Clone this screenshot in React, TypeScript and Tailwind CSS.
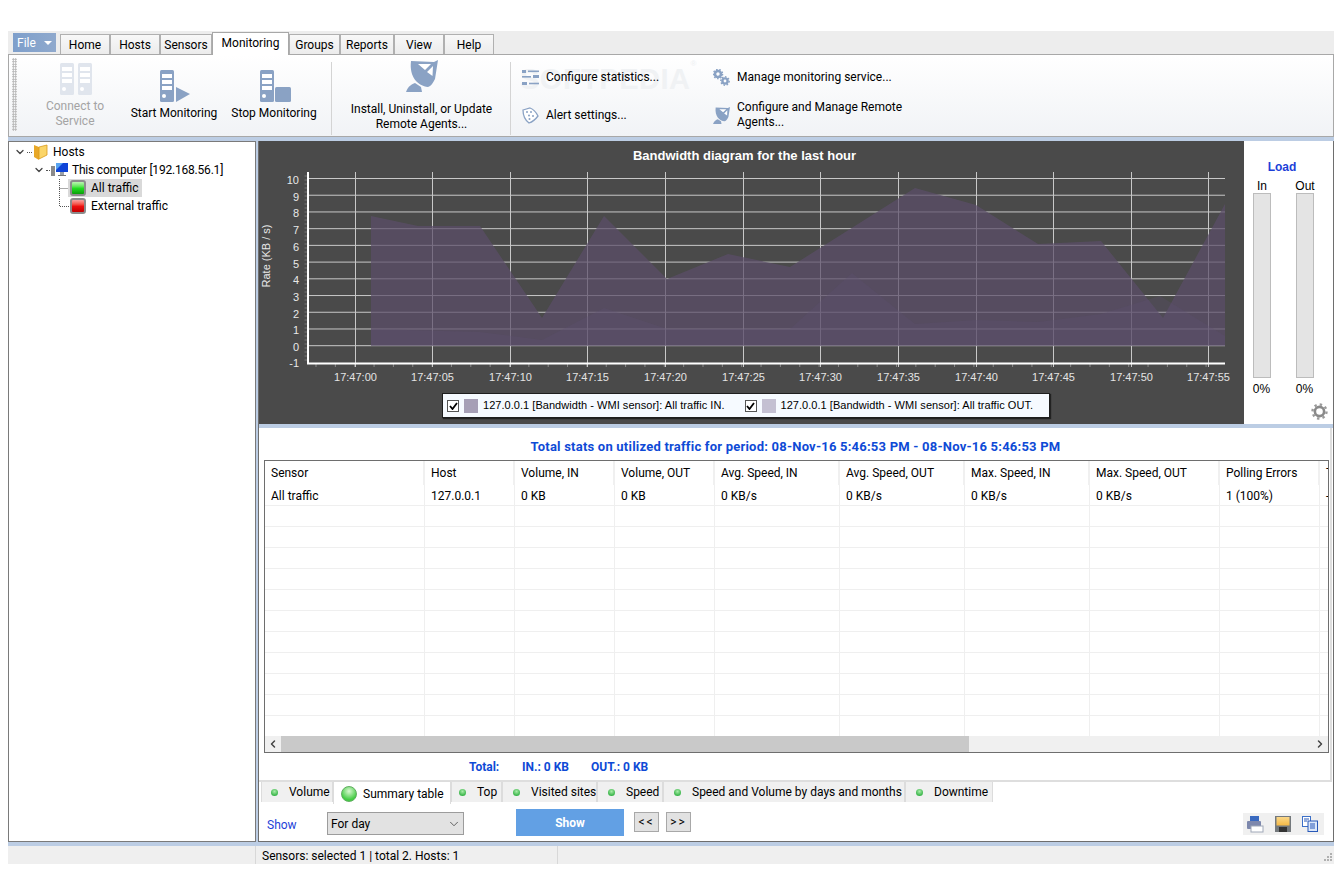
import { ReactNode } from 'react';
import { ChevronDown, ChevronLeft, ChevronRight } from 'lucide-react';

const UI_FONT = 'font-["Roboto","Noto_Sans",sans-serif]';

const topTabs = [
  { label: 'Home', width: 'w-[50px]' },
  { label: 'Hosts', width: 'w-[50px]' },
  { label: 'Sensors', width: 'w-[52px]' },
  { label: 'Monitoring', width: 'w-[77px]', active: true },
  { label: 'Groups', width: 'w-[51px]' },
  { label: 'Reports', width: 'w-[54px]' },
  { label: 'View', width: 'w-[50px]' },
  { label: 'Help', width: 'w-[50px]' },
];

const bottomTabs = [
  { label: 'Volume', width: 'w-[72px]', pad: 'pl-[9px]' },
  { label: 'Summary table', width: 'w-[118px]', active: true, pad: 'pl-[7px]' },
  { label: 'Top', width: 'w-[51px]', pad: 'pl-[7px]' },
  { label: 'Visited sites', width: 'w-[95px]', pad: 'pl-[10px]' },
  { label: 'Speed', width: 'w-[66px]', pad: 'pl-[10px]' },
  { label: 'Speed and Volume by days and months', width: 'w-[242px]', pad: 'pl-[10px]' },
  { label: 'Downtime', width: 'w-[88px]', pad: 'pl-[10px]' },
];

const columns = [
  { name: 'Sensor', value: 'All traffic' },
  { name: 'Host', value: '127.0.0.1' },
  { name: 'Volume, IN', value: '0 KB' },
  { name: 'Volume, OUT', value: '0 KB' },
  { name: 'Avg. Speed, IN', value: '0 KB/s' },
  { name: 'Avg. Speed, OUT', value: '0 KB/s' },
  { name: 'Max. Speed, IN', value: '0 KB/s' },
  { name: 'Max. Speed, OUT', value: '0 KB/s' },
  { name: 'Polling Errors', value: '1 (100%)' },
  { name: 'T', value: '-' },
];

const timeLabels = ['17:47:00', '17:47:05', '17:47:10', '17:47:15', '17:47:20', '17:47:25', '17:47:30', '17:47:35', '17:47:40', '17:47:45', '17:47:50', '17:47:55'];
const timeX = [355.5, 432.5, 510.5, 587.5, 665.5, 743.5, 820.5, 898.5, 976.5, 1053.5, 1131.5, 1208.5];

const areaIn = '371,345.7 371,216 418,226 480,226 542,318 604,216 667,279 728,254 790,267 915,188 976,205 1038,244 1101,241 1163,318 1225,204 1225,345.7';
const areaOut = '371,345.7 371,329 480,332 542,340 604,308 667,329 790,329 852,273 915,324 976,320 1038,322 1101,314 1160,296 1225,336 1225,345.7';

function ServerIcon({ color = '#8aa2c4', x = 0 }: { color?: string; x?: number }) {
  return (
    <g transform={`translate(${x} 0)`}>
      <rect x="0" y="0" width="14" height="32" rx="1.5" fill={color} />
      <rect x="2" y="4" width="10" height="4" fill="#fff" />
      <rect x="2" y="10" width="10" height="4" fill="#fff" />
      <rect x="2" y="16" width="10" height="4" fill="#fff" />
      <circle cx="4" cy="26" r="2" fill="#fff" />
    </g>
  );
}

function DishIcon({ size = 32, color = '#8aa2c4' }: { size?: number; color?: string }) {
  return (
    <svg width={size} height={size} viewBox="0 0 32 32">
      <path d="M5 1 L28 2 L32 0 L29 19 C27 23 25 26 22 27 C12 26 3 17 5 1 Z" fill={color} />
      <path d="M12 4 L25 4 L19 10 Z M27 6 L26.5 16 L21 12 Z" fill="#fff" />
      <path d="M0 32 C2 26 6 24 9 23 L15 27 L16 32 Z" fill={color} />
    </svg>
  );
}

function LargeButton({ width, icon, children, muted }: { width: string; icon: ReactNode; children: ReactNode; muted?: boolean }) {
  return (
    <div className={`flex flex-col items-center shrink-0 ${width}`}>
      {icon}
      <div className={`text-center leading-[15px] ${muted ? 'text-[#a4a4a4]' : 'text-black'}`}>{children}</div>
    </div>
  );
}

function SmallAction({ icon, children }: { icon: ReactNode; children: ReactNode }) {
  return (
    <div className="relative flex items-center h-[30px]">
      <div className="w-[24px] shrink-0 flex">{icon}</div>
      <div className="leading-[15px]">{children}</div>
    </div>
  );
}

function StatsIcon() {
  return (
    <svg width="17" height="17" viewBox="0 0 17 17" fill="#8aa2c4">
      <rect x="0" y="1" width="4" height="3" />
      <rect x="6" y="1.5" width="11" height="1.6" />
      <rect x="0" y="7" width="9" height="1.6" />
      <rect x="11" y="6" width="6" height="3" />
      <rect x="0" y="13" width="5" height="3" />
      <rect x="7" y="13.7" width="10" height="1.6" />
    </svg>
  );
}

function AlertIcon() {
  return (
    <svg width="17" height="17" viewBox="0 0 17 17">
      <path d="M1 3 L8 1 C11 2 14 5 16 9 C13 13 10 15 7 16 C3 13 1 8 1 3 Z" fill="#fff" stroke="#8aa2c4" strokeWidth="1.3" />
      <circle cx="5" cy="5" r="1" fill="#8aa2c4" />
      <circle cx="9" cy="5" r="1" fill="#8aa2c4" />
      <circle cx="7" cy="8.5" r="1" fill="#8aa2c4" />
      <circle cx="11" cy="9" r="1" fill="#8aa2c4" />
      <circle cx="7.5" cy="12" r="1" fill="#8aa2c4" />
    </svg>
  );
}

function GearsIcon() {
  return (
    <svg width="17" height="17" viewBox="0 0 17 17" fill="none" stroke="#8aa2c4">
      <circle cx="5" cy="5" r="3" strokeWidth="2.6" />
      <circle cx="5" cy="5" r="4.6" strokeWidth="1.4" strokeDasharray="1.6 1.6" />
      <circle cx="12" cy="12" r="2.6" strokeWidth="2.4" />
      <circle cx="12" cy="12" r="4.2" strokeWidth="1.4" strokeDasharray="1.6 1.6" />
    </svg>
  );
}

function Ribbon() {
  return (
    <div className="relative h-[83px] flex bg-gradient-to-b from-white to-[#f1f3f6] border border-[#a8a8a8] text-[12px] overflow-hidden">
      {/* watermark sits under the small action labels */}
      <div className='absolute left-[511px] top-[3px] text-[29px] font-bold tracking-[0.5px] text-[#f0f2f4] font-["Liberation_Sans",sans-serif]'>
        SOFTPEDIA<span className="text-[8px] align-top">®</span>
      </div>
      <div className="w-[5px] ml-[3px] mt-[3px] h-[73px] shrink-0 bg-[radial-gradient(#b4b4b4_50%,transparent_55%)] bg-[length:2.5px_2.5px]" />
      <div className="pl-[12px] pt-[8px] flex">
        <LargeButton
          width="w-[92px]"
          muted
          icon={
            <svg width="32" height="32" viewBox="0 0 32 32" className="mb-[4px] ml-[1px]">
              <ServerIcon color="#e0e5ed" x={0} />
              <ServerIcon color="#e0e5ed" x={18} />
            </svg>
          }
        >
          Connect to
          <br />
          Service
        </LargeButton>
        <div className="w-[7px] shrink-0" />
        <LargeButton
          width="w-[92px]"
          icon={
            <svg width="30" height="32" viewBox="0 0 30 32" className="mt-[7px] mb-[4px] ml-[2px]">
              <ServerIcon />
              <path d="M16 17 L30 24 L16 32 Z" fill="#8aa2c4" />
            </svg>
          }
        >
          <span className="whitespace-nowrap">Start Monitoring</span>
        </LargeButton>
        <div className="w-[8px] shrink-0" />
        <LargeButton
          width="w-[92px]"
          icon={
            <svg width="31" height="32" viewBox="0 0 31 32" className="mt-[7px] mb-[4px] ml-[3px]">
              <ServerIcon />
              <rect x="15" y="17" width="16" height="15" rx="1.5" fill="#8aa2c4" />
            </svg>
          }
        >
          <span className="whitespace-nowrap">Stop Monitoring</span>
        </LargeButton>
      </div>
      <div className="w-px h-[73px] mt-[7px] ml-[11px] bg-[#d4d4d4] shrink-0" />
      <div className="pt-[5px] pl-[1px]">
        <LargeButton
          width="w-[177px]"
          icon={
            <div className="mb-[8px] h-[34px]">
              <DishIcon />
            </div>
          }
        >
          Install, Uninstall, or Update
          <br />
          Remote Agents...
        </LargeButton>
      </div>
      <div className="w-px h-[73px] mt-[7px] bg-[#d4d4d4] shrink-0" />
      <div className="pl-[11px] pt-[7px] w-[202px] shrink-0 flex flex-col gap-[8px]">
        <SmallAction icon={<StatsIcon />}>Configure statistics...</SmallAction>
        <SmallAction icon={<AlertIcon />}>Alert settings...</SmallAction>
      </div>
      <div className="pt-[7px] w-[192px] shrink-0 flex flex-col gap-[8px]">
        <SmallAction icon={<GearsIcon />}>Manage monitoring service...</SmallAction>
        <SmallAction icon={<DishIcon size={17} />}>Configure and Manage Remote Agents...</SmallAction>
      </div>
    </div>
  );
}

function Connector({ last }: { last?: boolean }) {
  return (
    <svg width="11" height="18" viewBox="0 0 11 18" className="shrink-0">
      <path d={last ? 'M0.5 0 V9.5 H11' : 'M0.5 0 V18 M0.5 9.5 H11'} stroke="#555" strokeDasharray="1 1" fill="none" />
    </svg>
  );
}

function StateIcon({ color }: { color: 'green' | 'red' }) {
  const fill = color === 'green' ? 'from-[#b8f5b0] via-[#22e022] to-[#0aa00a]' : 'from-[#f8a0a0] via-[#f01010] to-[#c00000]';
  return <div className={`w-[16px] h-[16px] shrink-0 rounded-[3px] border-2 border-[#8c8c8c] bg-gradient-to-b ${fill}`} />;
}

function Tree() {
  return (
    <div className="w-[248px] shrink-0 bg-white border border-[#7a7a7a] text-[12px] pt-[1px] text-black">
      <div className="h-[18px] flex items-center">
        <ChevronDown size={12} strokeWidth={2.6} className="ml-[5px] text-[#444]" />
        <div className="w-[5px] ml-[1px] mr-px border-t border-dotted border-[#555]" />
        <svg width="16" height="17" viewBox="0 0 16 17" className="shrink-0">
          <path d="M1 1 L6 3 V16 L1 13 Z" fill="#e8a828" />
          <path d="M6 3 L14 1 V11 L6 15 Z" fill="#fbd568" stroke="#d99a1c" strokeWidth="0.8" />
        </svg>
        <span className="ml-[4px]">Hosts</span>
      </div>
      <div className="h-[18px] flex items-center">
        <ChevronDown size={12} strokeWidth={2.6} className="ml-[24px] text-[#444]" />
        <div className="w-[4px] ml-[1px] mr-px border-t border-dotted border-[#555]" />
        <svg width="17" height="16" viewBox="0 0 17 16" className="shrink-0">
          <rect x="0" y="4" width="4" height="10" fill="#8a8a8a" />
          <rect x="5" y="1" width="12" height="9" fill="#0f44d8" />
          <path d="M5 1 H12 L5 8 Z" fill="#5aa4f0" />
          <rect x="9" y="10" width="4" height="3" fill="#9aa0a8" />
          <rect x="7" y="13" width="8" height="1" fill="#777" />
        </svg>
        <span className="ml-[4px] whitespace-nowrap tracking-[-0.2px]">This computer [192.168.56.1]</span>
      </div>
      <div className="h-[18px] flex items-center pl-[50px]">
        <Connector />
        <div className="flex items-center gap-[3px] bg-[#d9d9d9] h-[18px] w-[74px] -ml-[2px] pl-[2px]">
          <StateIcon color="green" />
          <span className="ml-[2px]">All traffic</span>
        </div>
      </div>
      <div className="h-[18px] flex items-center pl-[50px]">
        <Connector last />
        <div className="flex items-center gap-[3px] h-[18px] -ml-[2px] pl-[2px]">
          <StateIcon color="red" />
          <span className="ml-[2px] whitespace-nowrap">External traffic</span>
        </div>
      </div>
    </div>
  );
}

function BandwidthChart() {
  const gridY = Array.from({ length: 11 }, (_, i) => 178.5 + i * 16.72);
  const minorX = Array.from({ length: 47 }, (_, i) => 316 + i * 19.35);
  const minorY = Array.from({ length: 47 }, (_, i) => 176 + i * 4);
  return (
    <svg width="985" height="225" viewBox="259 165 985 225" className='block shrink-0 font-["Liberation_Sans",sans-serif]'>
      {minorY.map((y) => (
        <line key={y} x1="304.5" x2="307" y1={y} y2={y} stroke="#777" />
      ))}
      {minorX.map((x) => (
        <line key={x} x1={x} x2={x} y1="364" y2="367" stroke="#888" />
      ))}
      {gridY.map((y) => (
        <line key={y} x1="308" x2="1225" y1={y} y2={y} stroke="#c8c8c8" />
      ))}
      {timeX.map((x) => (
        <line key={x} x1={x} x2={x} y1="172" y2="367" stroke="#c8c8c8" />
      ))}
      <polygon points={areaIn} fill="#5b4e69" fillOpacity="0.72" />
      <polygon points={areaOut} fill="#5e5072" fillOpacity="0.3" />
      <line x1="308" x2="308" y1="172" y2="364" stroke="#fff" strokeWidth="2" />
      <line x1="307" x2="1225" y1="363.5" y2="363.5" stroke="#fff" strokeWidth="2" />
      {['10', '9', '8', '7', '6', '5', '4', '3', '2', '1', '0', '-1'].map((label, i) => (
        <text key={label} x="299" y={184 + i * 16.72 - (i === 11 ? 1 : 0)} textAnchor="end" fontSize="11" fill="#e8e8e8">
          {label}
        </text>
      ))}
      {timeLabels.map((label, i) => (
        <text key={label} x={timeX[i]} y="381" textAnchor="middle" fontSize="11" fill="#e4e4e4">
          {label}
        </text>
      ))}
      <text x="0" y="0" transform="translate(270 256) rotate(-90)" textAnchor="middle" fontSize="11" fill="#e8e8e8">
        Rate (KB / s)
      </text>
    </svg>
  );
}

function LegendItem({ swatch, label }: { swatch: string; label: string }) {
  return (
    <div className="flex items-center h-full">
      <div className="w-[12px] h-[12px] bg-white border border-[#555] flex items-center justify-center">
        <svg width="9" height="8" viewBox="0 0 9 8">
          <path d="M1 4 L3.5 7 L8 1" stroke="#000" strokeWidth="1.8" fill="none" />
        </svg>
      </div>
      <div className={`w-[14px] h-[14px] ml-[5px] ${swatch}`} />
      <span className="ml-[5px] whitespace-nowrap tracking-[0.04px]">{label}</span>
    </div>
  );
}

function ChartPanel() {
  return (
    <div className="w-[985px] shrink-0 bg-[#4a4a4a] flex flex-col">
      <div className='h-[24px] pt-[7px] pr-[14px] text-center text-[13px] leading-[16px] font-bold text-white font-["Liberation_Sans",sans-serif]'>
        Bandwidth diagram for the last hour
      </div>
      <BandwidthChart />
      <div className='ml-[183px] mt-[3px] w-[608px] h-[25px] bg-[#f6faff] border border-[#1e1e1e] shadow-[1px_1px_1px_#222] pl-[4px] flex gap-[20px] text-[11px] text-black font-["Liberation_Sans",sans-serif]'>
        <LegendItem swatch="bg-[#a69fb6]" label="127.0.0.1 [Bandwidth - WMI sensor]: All traffic IN." />
        <LegendItem swatch="bg-[#c4c0d2]" label="127.0.0.1 [Bandwidth - WMI sensor]: All traffic OUT." />
      </div>
    </div>
  );
}

function LoadBar({ label }: { label: string }) {
  return (
    <div className="w-[18px] flex flex-col items-center">
      <div className="h-[17px] leading-[21px] whitespace-nowrap">{label}</div>
      <div className="w-[18px] h-[185px] bg-[#e4e4e4] border border-[#bcbcbc]" />
      <div className="mt-[3px] leading-[16px] -ml-px">0%</div>
    </div>
  );
}

function LoadPanel() {
  return (
    <div className='flex-1 bg-white flex flex-col relative text-[12px] text-black font-["Liberation_Sans",sans-serif]'>
      <div className="text-center font-bold text-[#1d3fd8] mt-[19px] h-[16px] leading-[14px] pr-[13px] text-[12px]">Load</div>
      <div className="flex gap-[25px] pl-[9px]">
        <LoadBar label="In" />
        <LoadBar label="Out" />
      </div>
      <svg width="17" height="17" viewBox="0 0 17 17" className="absolute right-[5px] bottom-[4px]" fill="none">
        <circle cx="8.5" cy="8.5" r="4.6" stroke="#8a8a8a" strokeWidth="2.6" />
        <circle cx="8.5" cy="8.5" r="7" stroke="#9a9a9a" strokeWidth="2.4" strokeDasharray="2.4 3.1" />
      </svg>
    </div>
  );
}

const gridTemplate = 'grid grid-cols-[160px_90px_100px_100px_125px_125px_125px_130px_100px_21px]';

function StatsTable() {
  return (
    <div className="ml-[5px] h-[293px] w-[1065px] border border-[#6e6e6e] flex flex-col bg-white overflow-hidden text-[12px] text-black">
      <div className={`${gridTemplate} h-[24px] shrink-0`}>
        {columns.map((c) => (
          <div key={c.name} className="pl-[6px] leading-[24px] border-r-2 border-[#f0f0f0] whitespace-nowrap overflow-hidden">
            {c.name}
          </div>
        ))}
      </div>
      <div className={`${gridTemplate} h-[21px] shrink-0 border-b border-[#efefef]`}>
        {columns.map((c) => (
          <div key={c.name} className="pl-[6px] leading-[22px] border-r border-[#efefef] whitespace-nowrap overflow-hidden">
            {c.value}
          </div>
        ))}
      </div>
      {Array.from({ length: 11 }, (_, row) => (
        <div key={row} className={`${gridTemplate} h-[21px] shrink-0 border-b border-[#efefef]`}>
          {columns.map((c) => (
            <div key={c.name} className="border-r border-[#efefef]" />
          ))}
        </div>
      ))}
      <div className="h-[16px] -mt-px shrink-0 bg-[#f0f0f0] flex items-center">
        <div className="w-[16px] flex justify-center">
          <ChevronLeft size={12} strokeWidth={3} className="text-[#444]" />
        </div>
        <div className="w-[688px] h-full bg-[#c9c9c9]" />
        <div className="flex-1" />
        <div className="w-[17px] flex justify-center">
          <ChevronRight size={12} strokeWidth={3} className="text-[#444]" />
        </div>
      </div>
    </div>
  );
}

function TabDot({ large }: { large?: boolean }) {
  return large ? (
    <div className="w-[16px] h-[16px] rounded-full border border-[#5fae5f] bg-[radial-gradient(circle_at_50%_30%,#d8f8d0,#44cc44_70%)] shrink-0" />
  ) : (
    <div className="w-[7px] h-[7px] rounded-full bg-[radial-gradient(circle_at_50%_35%,#a8eca8,#3ab54a_70%)] shrink-0" />
  );
}

function BottomTabs() {
  return (
    <div className="flex pl-[2px] h-[22px] items-start text-[12px] text-black">
      {bottomTabs.map((t) =>
        t.active ? (
          <div key={t.label} className={`${t.width} ${t.pad} h-[23px] -mt-px bg-white border-x border-t border-[#dcdcdc] flex items-center gap-[6px] shrink-0 pt-[2px] whitespace-nowrap`}>
            <TabDot large />
            {t.label}
          </div>
        ) : (
          <div key={t.label} className={`${t.width} ${t.pad} h-[20px] bg-[#f0f0f0] border-x border-[#dcdcdc] flex items-center gap-[11px] shrink-0 whitespace-nowrap overflow-hidden`}>
            <TabDot />
            {t.label}
          </div>
        ),
      )}
    </div>
  );
}

function ExportIcons() {
  return (
    <div className="w-[81px] h-[22px] bg-[#f0f0f0] flex items-center pl-[4px] gap-[10px] shrink-0">
      <svg width="17" height="17" viewBox="0 0 17 17">
        <rect x="3" y="0" width="9" height="6" fill="#3a6ac0" />
        <rect x="0" y="5" width="14" height="8" rx="1" fill="#7d88ad" />
        <rect x="4" y="10" width="12" height="6" fill="#fff" stroke="#a0a8b8" />
      </svg>
      <svg width="16" height="17" viewBox="0 0 16 17" className="ml-[1px]">
        <defs>
          <linearGradient id="saveTop" x1="0" y1="0" x2="0" y2="1">
            <stop offset="0" stopColor="#fbd88a" />
            <stop offset="1" stopColor="#f5b945" />
          </linearGradient>
        </defs>
        <rect width="16" height="16" fill="#74797d" />
        <rect x="1.5" y="1" width="13" height="8.5" fill="url(#saveTop)" />
        <rect x="4" y="11" width="8" height="5" fill="#333" />
      </svg>
      <svg width="16" height="16" viewBox="0 0 16 16" className="ml-[1px]">
        <rect x="0.5" y="0.5" width="8" height="10" fill="#fff" stroke="#3c70c8" />
        <rect x="6" y="5" width="9.5" height="10.5" fill="#dce8fa" stroke="#2858b8" />
        <path d="M8 8 H13 M8 10 H13 M8 12 H13 M2 3 H7 M2 5 H5" stroke="#2858b8" />
      </svg>
    </div>
  );
}

export default function App() {
  return (
    <div className={`w-[1342px] h-[872px] bg-white pt-[31px] px-[8px] overflow-hidden ${UI_FONT}`}>
      <div className="h-[23px] bg-[#ededed] flex items-end text-[12px] text-black relative z-10">
        <div className="w-[43px] h-[19px] ml-[5px] mb-[2px] bg-gradient-to-r from-[#7e9fcb] to-[#8fa9cd] text-white flex items-center pl-[4px] gap-[8px]">
          File
          <svg width="8" height="4" viewBox="0 0 8 4">
            <path d="M0 0 H8 L4 4 Z" fill="#fff" />
          </svg>
        </div>
        <div className="flex ml-[4px] items-end">
          {topTabs.map((t) =>
            t.active ? (
              <div key={t.label} className={`${t.width} h-[23px] -mb-px bg-white border-x border-t border-[#a8a8a8] flex justify-center pt-[1px] shrink-0`}>
                {t.label}
              </div>
            ) : (
              <div key={t.label} className={`${t.width} h-[20px] bg-gradient-to-b from-[#f8f8f8] to-[#ececec] border-x border-t border-[#b0b0b0] flex justify-center pt-[1px] shrink-0`}>
                {t.label}
              </div>
            ),
          )}
        </div>
      </div>
      <Ribbon />
      <div className="bg-[#bccde4] pt-[4px] h-[727px] flex flex-col">
        <div className="flex h-[701px] shrink-0 gap-[2px]">
          <Tree />
          <div className="flex-1 flex flex-col border-x border-b border-[#6e6e6e] bg-[#bccde4]">
            <div className="flex h-[283px] shrink-0">
              <ChartPanel />
              <LoadPanel />
            </div>
            <div className="h-[4px] shrink-0" />
            <div className="flex-1 bg-white flex flex-col">
              <div className="h-[354px] shrink-0 border-r-2 border-b-2 border-[#dedede] flex flex-col w-[1073px]">
                <div className="h-[32px] pt-[10px] pl-[2px] leading-[18px] text-center font-bold text-[13px] tracking-[0.22px] text-[#0e4ad6]">
                  Total stats on utilized traffic for period: 08-Nov-16 5:46:53 PM - 08-Nov-16 5:46:53 PM
                </div>
                <StatsTable />
                <div className="flex-1 pl-[210px] flex items-center gap-[22px] text-[12px] font-bold text-[#0e4ad6]">
                  <span className="w-[31px]">Total:</span>
                  <span>IN.: 0 KB</span>
                  <span>OUT.: 0 KB</span>
                </div>
              </div>
              <BottomTabs />
              <div className="flex-1 flex pl-[8px] pt-[5px] items-start text-[12px]">
                <span className="w-[60px] mt-[7px] text-[#1d3fd8]">Show</span>
                <div className="w-[137px] h-[23px] mt-[3px] bg-[#e2e2e2] border border-[#9c9c9c] flex items-center pl-[3px] text-black">
                  For day
                  <ChevronDown size={14} strokeWidth={1.4} className="ml-auto mr-[2px] text-[#444]" />
                </div>
                <div className="w-[108px] h-[27px] ml-[52px] bg-[#62a0e4] text-white font-bold flex items-center justify-center text-[12px]">Show</div>
                <div className="w-[25px] h-[20px] ml-[10px] mt-[3px] bg-[#e2e2e2] border border-[#a8a8a8] flex items-center justify-center text-black tracking-[2px]">{'<<'}</div>
                <div className="w-[25px] h-[20px] ml-[7px] mt-[3px] bg-[#e2e2e2] border border-[#a8a8a8] flex items-center justify-center text-black tracking-[2px]">{'>>'}</div>
                <div className="flex-1" />
                <div className="mr-[9px] mt-[4px]">
                  <ExportIcons />
                </div>
              </div>
            </div>
          </div>
        </div>
        <div className="h-[4px] shrink-0" />
        <div className="flex-1 bg-[#efefef] flex text-[12px] text-black relative">
          <div className="w-[248px] shrink-0 border-r border-[#d8d8d8]" />
          <div className="w-[302px] pl-[6px] leading-[21px] h-[18px] border-r border-[#d8d8d8] whitespace-nowrap">Sensors: selected 1 | total 2. Hosts: 1</div>
          <svg width="10" height="10" viewBox="0 0 10 10" className="absolute right-[1px] bottom-[2px]" fill="#b0b0b0">
            <rect x="7" y="1" width="2" height="2" />
            <rect x="4" y="4" width="2" height="2" />
            <rect x="7" y="4" width="2" height="2" />
            <rect x="1" y="7" width="2" height="2" />
            <rect x="4" y="7" width="2" height="2" />
            <rect x="7" y="7" width="2" height="2" />
          </svg>
        </div>
      </div>
    </div>
  );
}
